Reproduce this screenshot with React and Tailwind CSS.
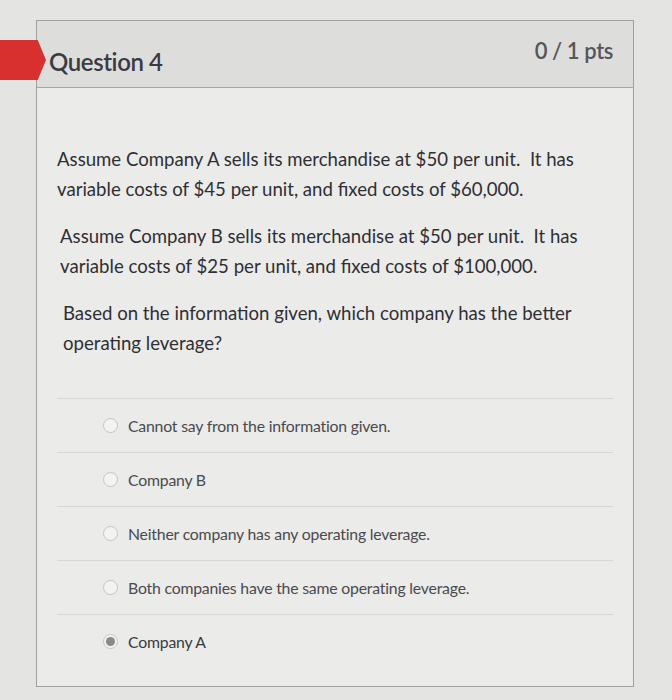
import React from 'react';

const options = [
  { label: 'Cannot say from the information given.', selected: false },
  { label: 'Company B', selected: false },
  { label: 'Neither company has any operating leverage.', selected: false },
  { label: 'Both companies have the same operating leverage.', selected: false },
  { label: 'Company A', selected: true },
];

function Radio({ selected }) {
  return (
    <span className="flex h-[15px] w-[15px] shrink-0 items-center justify-center rounded-full border border-[#c4c4c2] bg-[#f3f3f1]">
      {selected && <span className="h-[9px] w-[9px] rounded-full bg-[#8a8a8a]" />}
    </span>
  );
}

export default function App() {
  return (
    <div className="relative h-[700px] w-[672px] overflow-hidden bg-[#e4e4e2] pl-[36px] pt-[20px] font-['Lato','Noto_Sans',sans-serif]">
      <div className="absolute left-0 top-[40px] h-[40px] w-[46px] bg-[#d8302e] [clip-path:polygon(0_0,82%_0,100%_50%,82%_100%,0_100%)]" />

      <div className="w-[598px] border border-[#a0a09e] bg-[#ebebe9]">
        <div className="flex h-[67px] items-start justify-between border-b border-[#a6a6a4] bg-[#dddddb] pl-[12px] pr-[20px]">
          <h2 className="pt-[23px] text-[24px] font-semibold tracking-[-0.4px] text-[#3a3a42]">Question 4</h2>
          <span className="pt-[13px] text-[22px] font-semibold tracking-[-0.4px] text-[#55555a]">0 / 1 pts</span>
        </div>

        <div className="px-[20px] pb-[18px] pt-[56px]">
          <div className="space-y-[17px] text-[18.6px] leading-[30px] text-[#2f2f34]">
            <p>Assume Company A sells its merchandise at $50 per unit.&nbsp; It has variable costs of $45 per unit, and fixed costs of $60,000.</p>
            <p className="pl-[3px]">Assume Company B sells its merchandise at $50 per unit.&nbsp; It has variable costs of $25 per unit, and fixed costs of $100,000.</p>
            <p className="pl-[6px]">Based on the information given, which company has the better operating leverage?</p>
          </div>

          <div className="mt-[40px]">
            {options.map((opt) => (
              <div key={opt.label} className="flex h-[54px] items-center gap-[10px] border-t border-[#d6d6d4] pl-[46px] text-[15.8px] tracking-[-0.2px] text-[#4a4a4e]">
                <Radio selected={opt.selected} />
                <span className={opt.selected ? 'text-[#3a3a3e]' : ''}>{opt.label}</span>
              </div>
            ))}
          </div>
        </div>
      </div>
    </div>
  );
}
